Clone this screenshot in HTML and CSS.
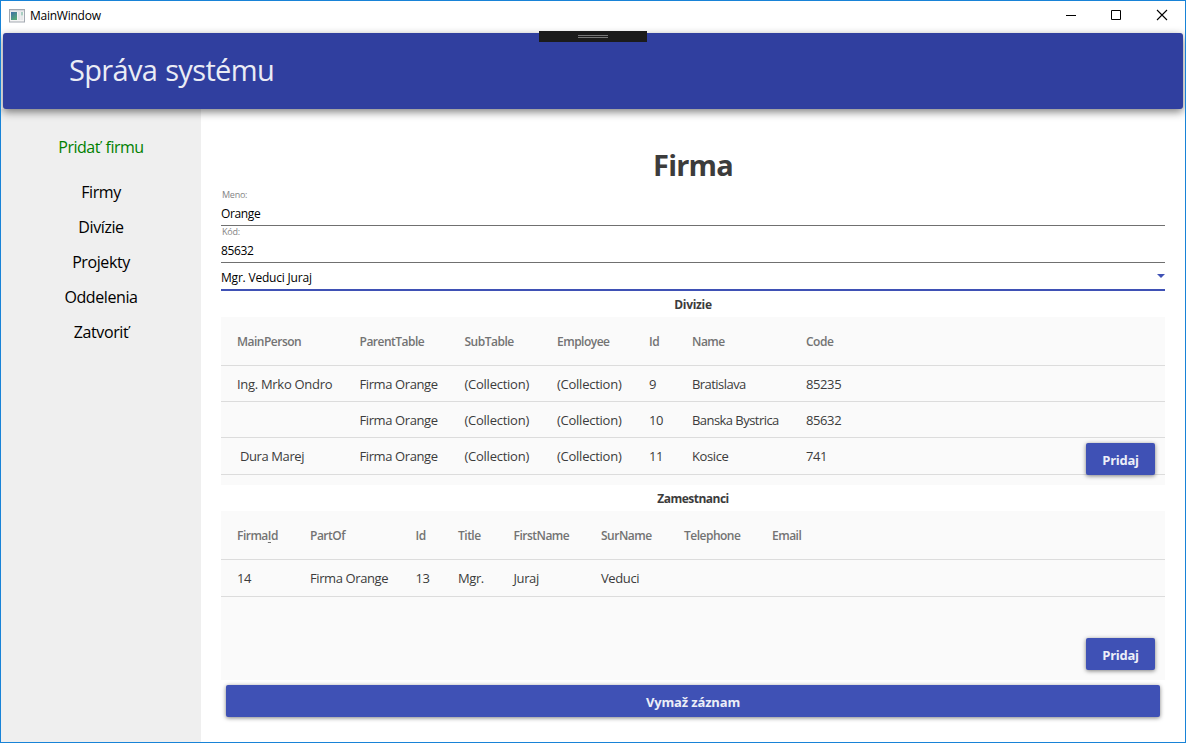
FILE: index.html
```html
<!DOCTYPE html>
<html lang="sk">
<head>
<meta charset="utf-8">
<title>MainWindow</title>
<link rel="stylesheet" href="styles.css">
</head>
<body>
<div class="window">
  <div class="titlebar">
    <svg class="app-icon" width="16" height="14" viewBox="0 0 16 14">
      <defs><linearGradient id="pane" x1="0" y1="0" x2="0.6" y2="1"><stop offset="0" stop-color="#3c6ea8"/><stop offset="1" stop-color="#55a878"/></linearGradient></defs>
      <rect x="0.5" y="0.5" width="15" height="12.5" fill="#f4f4f4" stroke="#a3a9b1"/>
      <rect x="1" y="1" width="14" height="1.4" fill="#d4d7dc"/>
      <rect x="2" y="3" width="6" height="8" fill="url(#pane)"/>
      <rect x="9" y="3" width="2.5" height="8" fill="#e2e4e8"/>
      <rect x="12" y="3" width="2" height="3.5" fill="#a9cfc2"/>
      <rect x="12" y="7" width="2" height="4" fill="#e6e8ea"/>
    </svg>
    <span class="title-text">MainWindow</span>
    <svg class="controls" width="104" height="12" viewBox="0 0 104 12" fill="none" stroke="#000">
      <path d="M1 6.5h10M46.500 1.500h9v9h-9z"/>
      <path d="M92 1l10 10M102 1L92 11" stroke-width="1.1"/>
    </svg>
  </div>
  <div class="header"><h1>Správa systému</h1></div>
  <div class="debug-handle"><i></i><i></i></div>
  <div class="body">
    <nav class="sidebar">
      <a class="add">Pridať firmu</a>
      <a>Firmy</a>
      <a>Divízie</a>
      <a>Projekty</a>
      <a>Oddelenia</a>
      <a>Zatvoriť</a>
    </nav>
    <main class="main">
      <h2>Firma</h2>
      <div class="field"><label>Meno:</label><span>Orange</span></div>
      <div class="field"><label>Kód:</label><span>85632</span></div>
      <div class="combo"><span>Mgr. Veduci Juraj</span><i class="arrow"></i></div>
      <h3>Divizie</h3>
      <section class="grid divisions">
        <div class="row head"><span>MainPerson</span><span>ParentTable</span><span>SubTable</span><span>Employee</span><span>Id</span><span>Name</span><span>Code</span></div>
        <div class="row"><span class="wide">Ing. Mrko Ondro</span><span>Firma Orange</span><span class="coll">(Collection)</span><span class="coll">(Collection)</span><span>9</span><span class="tight">Bratislava</span><span>85235</span></div>
        <div class="row"><span></span><span>Firma Orange</span><span class="coll">(Collection)</span><span class="coll">(Collection)</span><span>10</span><span class="tight">Banska Bystrica</span><span>85632</span></div>
        <div class="row last"><span>&nbsp;Dura Marej</span><span>Firma Orange</span><span class="coll">(Collection)</span><span class="coll">(Collection)</span><span>11</span><span>Kosice</span><span>741</span></div>
        <button class="btn add-btn">Pridaj</button>
      </section>
      <h3 class="h-emp">Zamestnanci</h3>
      <section class="grid employees">
        <div class="row head"><span>Firma<u>I</u>d</span><span>PartOf</span><span>Id</span><span>Title</span><span>FirstName</span><span>SurName</span><span>Telephone</span><span>Email</span></div>
        <div class="row last"><span>14</span><span>Firma Orange</span><span>13</span><span>Mgr.</span><span>Juraj</span><span>Veduci</span><span></span><span></span></div>
        <button class="btn add-btn">Pridaj</button>
      </section>
      <button class="btn delete">Vymaž záznam</button>
    </main>
  </div>
</div>
</body>
</html>
```
FILE: styles.css
```css
* { box-sizing: border-box; }
body { margin: 0; font-family: "Open Sans", "Noto Sans", sans-serif; color: #3c3c3c; }
h1, h2, h3 { margin: 0; }
.window { position: relative; width: 1186px; height: 743px; border: 1px solid #1883d7; background: #fff; display: flex; flex-direction: column; overflow: hidden; }
.titlebar { height: 32px; flex: none; display: flex; align-items: center; padding: 0 16px 3px 8px; }
.app-icon { margin-right: 5px; }
.controls { margin-bottom: 2px; }
.title-text { flex: 1; font-size: 12px; color: #000; letter-spacing: -0.25px; }
.header { position: relative; z-index: 1; flex: none; height: 76px; margin: 0 2px; border-radius: 3px; background: #303f9f; box-shadow: 0 3px 9px rgba(0,0,0,.5); display: flex; align-items: center; padding: 0 0 2px 66px; }
h1 { font-size: 29px; line-height: 40px; font-weight: 400; color: #eaecf5; letter-spacing: -0.65px; word-spacing: 1px; }
.debug-handle { position: absolute; z-index: 2; left: 538px; top: 30px; width: 108px; height: 11px; background: #1b1b1b; display: flex; flex-direction: column; align-items: center; gap: 1px; padding-top: 4px; }
.debug-handle i { width: 30px; height: 1px; background: #777; }
.body { flex: 1; display: flex; min-height: 0; }
.sidebar { width: 200px; background: #efefef; padding-top: 21px; display: flex; flex-direction: column; align-items: center; color: #000; font-size: 16px; }
.sidebar a { height: 35px; line-height: 35px; white-space: nowrap; letter-spacing: -0.4px; }
.sidebar .add { color: #008000; margin-bottom: 10px; letter-spacing: -0.5px; word-spacing: 2px; }
.main { flex: 1; padding: 35px 20px 0; display: flex; flex-direction: column; }
h2 { height: 43px; line-height: 42px; text-align: center; font-size: 29px; font-weight: 700; letter-spacing: -0.8px; }
.field { height: 37px; border-bottom: 1px solid #707070; display: flex; flex-direction: column; color: #000; font-size: 12px; }
.field:first-of-type { height: 39px; padding-top: 2px; }
.field label { height: 12px; line-height: 11px; padding-left: 1px; font-size: 9px; color: #858585; letter-spacing: -0.25px; }
.field span, .combo span { line-height: 24px; letter-spacing: -0.35px; }
.field span { line-height: 26px; height: 24px; }
.combo { height: 28px; border-bottom: 2px solid #3f51b5; display: flex; justify-content: space-between; align-items: flex-start; padding-top: 3px; color: #000; font-size: 12px; }
.combo span { letter-spacing: -0.2px; }
.arrow { margin-top: 8px; border: 4px solid transparent; border-top-color: #3f51b5; border-bottom: 0; }
h3 { height: 26px; line-height: 27px; text-align: center; font-size: 12px; font-weight: 700; letter-spacing: -0.3px; }
.h-emp { letter-spacing: -0.5px; }
.grid { position: relative; background: #fafafa; font-size: 13px; }
.divisions { height: 168px; }
.employees { height: 169px; }
.row { display: grid; height: 36px; line-height: 37px; border-bottom: 1px solid #dcdcdc; padding-left: 16px; white-space: nowrap; letter-spacing: -0.4px; }
.divisions .row { grid-template-columns: 122.500px 105px 92.500px 92px 43px 114px 1fr; }
.employees .row { grid-template-columns: 73px 105.500px 42.500px 55.500px 87.500px 83px 88px 1fr; }
.row .coll { letter-spacing: -0.25px; }
.row .wide { letter-spacing: -0.3px; }
.row .tight { letter-spacing: -0.55px; }
.row.head { height: 49px; line-height: 50px; font-size: 12px; font-weight: 600; color: #737373; letter-spacing: -0.5px; }
.row.last { height: 37px; }
.row u { text-underline-offset: 2px; }
.btn { border: 0; border-radius: 2px; height: 32px; padding: 0; background: #3f51b5; color: #eceef8; font: 700 13px/34px "Open Sans", "Noto Sans", sans-serif; letter-spacing: -0.3px; box-shadow: 0 1px 4px rgba(0,0,0,.5); }
.add-btn { position: absolute; right: 10px; bottom: 10px; width: 69px; }
.delete { flex: none; margin: 5px; letter-spacing: -0.15px; }
```
